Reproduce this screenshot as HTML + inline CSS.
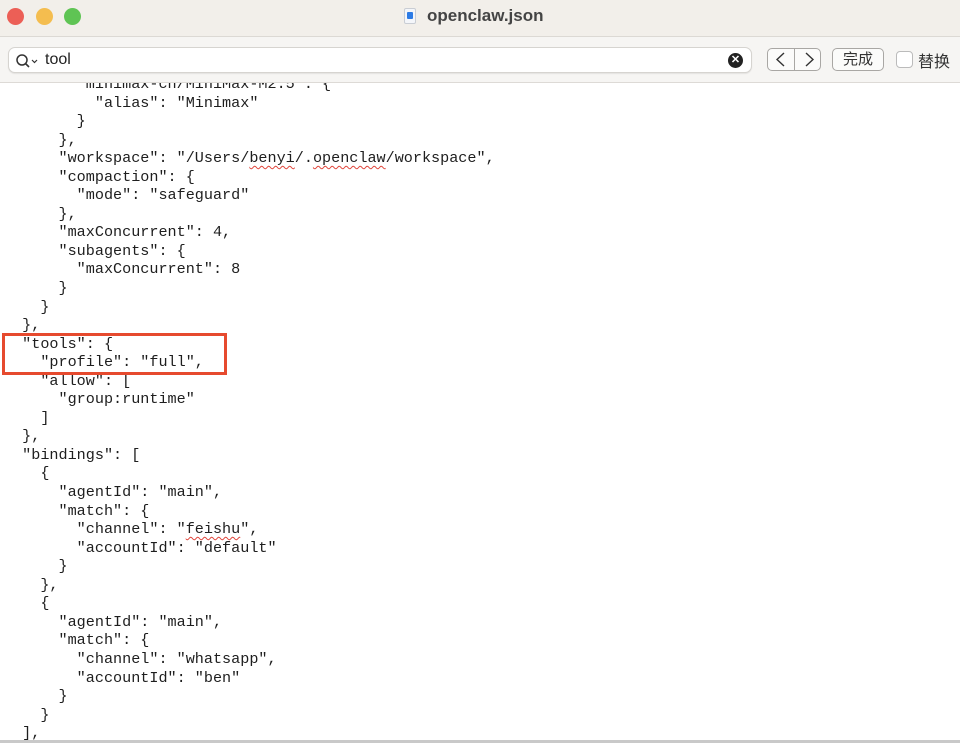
<!DOCTYPE html>
<html><head><meta charset="utf-8"><style>
*{margin:0;padding:0;box-sizing:border-box}
body{width:960px;height:743px;overflow:hidden;background:#fff;font-family:"Liberation Sans","Noto Sans CJK SC",sans-serif;position:relative}
.title{position:absolute;left:0;top:0;width:960px;height:37px;background:#f2efea;border-bottom:1px solid #dcd9d4}
.dot{position:absolute;top:8px;width:17px;height:17px;border-radius:50%}
.tb{position:absolute;left:0;top:37px;width:960px;height:46px;background:#f6f5f3;border-bottom:1px solid #dddad6}
.search{position:absolute;left:8px;top:10px;width:744px;height:26px;background:#fff;border:1px solid #d6d4d0;border-radius:7px;box-shadow:0 1px 1px rgba(0,0,0,.08)}
.btn{position:absolute;top:11px;height:23px;border:1px solid #a9a7a4;border-radius:5px;background:#fbfbfa;font-size:15px;color:#333;text-align:center;line-height:21px}
pre{position:absolute;left:4px;top:75px;font-family:"Liberation Mono",monospace;font-size:15.15px;line-height:18.55px;color:#1e1e1e;letter-spacing:0}
.sq{text-decoration:underline wavy #e0443a;text-decoration-thickness:1px;text-underline-offset:3px}
.box{position:absolute;left:2px;top:333px;width:225px;height:42px;border:3px solid #e64a2e}
</style></head><body>
<pre>        "minimax-cn/MiniMax-M2.5": {
          "alias": "Minimax"
        }
      },
      "workspace": "/Users/<span class="sq">benyi</span>/.<span class="sq">openclaw</span>/workspace",
      "compaction": {
        "mode": "safeguard"
      },
      "maxConcurrent": 4,
      "subagents": {
        "maxConcurrent": 8
      }
    }
  },
  "tools": {
    "profile": "full",
    "allow": [
      "group:runtime"
    ]
  },
  "bindings": [
    {
      "agentId": "main",
      "match": {
        "channel": "<span class="sq">feishu</span>",
        "accountId": "default"
      }
    },
    {
      "agentId": "main",
      "match": {
        "channel": "whatsapp",
        "accountId": "ben"
      }
    }
  ],</pre>
<div class="box"></div>
<div class="title">
 <div class="dot" style="left:7px;background:#ec5f56"></div>
 <div class="dot" style="left:36px;background:#f4bd4f"></div>
 <div class="dot" style="left:64px;background:#5fc454"></div>
 <div style="position:absolute;left:404px;top:8px;width:12px;height:16px;background:#f4f6fa;border:1px solid #c9cdd4;border-radius:2px"><div style="position:absolute;left:2px;top:3px;width:6px;height:7px;background:#2c7be5;border-radius:1px"></div></div>
 <div style="position:absolute;left:427px;top:6px;font-size:17px;font-weight:bold;color:#444">openclaw.json</div>
</div>
<div class="tb">
 <div class="search">
  <svg style="position:absolute;left:6px;top:5px" width="26" height="16" viewBox="0 0 26 16"><circle cx="7" cy="7" r="5" fill="none" stroke="#333" stroke-width="1.5"/><path d="M10.5 10.5L14 14" stroke="#333" stroke-width="1.6"/><path d="M17 7l2.5 2.5L22 7" fill="none" stroke="#333" stroke-width="1.2"/></svg>
  <div style="position:absolute;left:36px;top:3px;font-size:16px;color:#222">tool</div>
  <div style="position:absolute;left:719px;top:5px;width:15px;height:15px;border-radius:50%;background:#222;color:#fff;font-size:11px;line-height:15px;text-align:center;font-weight:bold">✕</div>
 </div>
 <div class="btn" style="left:767px;width:54px"><div style="position:absolute;left:26px;top:0;width:1px;height:21px;background:#a9a7a4"></div>
  <svg style="position:absolute;left:0;top:0" width="54" height="21"><path d="M16 4L9 10.5L16 17M38 4L45 10.5L38 17" fill="none" stroke="#333" stroke-width="1.4"/></svg></div>
 <div class="btn" style="left:832px;width:52px">完成</div>
 <div style="position:absolute;left:896px;top:14px;width:17px;height:17px;border:1px solid #bbb;border-radius:4px;background:#fff"></div>
 <div style="position:absolute;left:918px;top:11px;font-size:16px;color:#333">替换</div>
</div>
<div style="position:absolute;left:0;top:740px;width:960px;height:3px;background:#c9c9c9"></div>
</body></html>
